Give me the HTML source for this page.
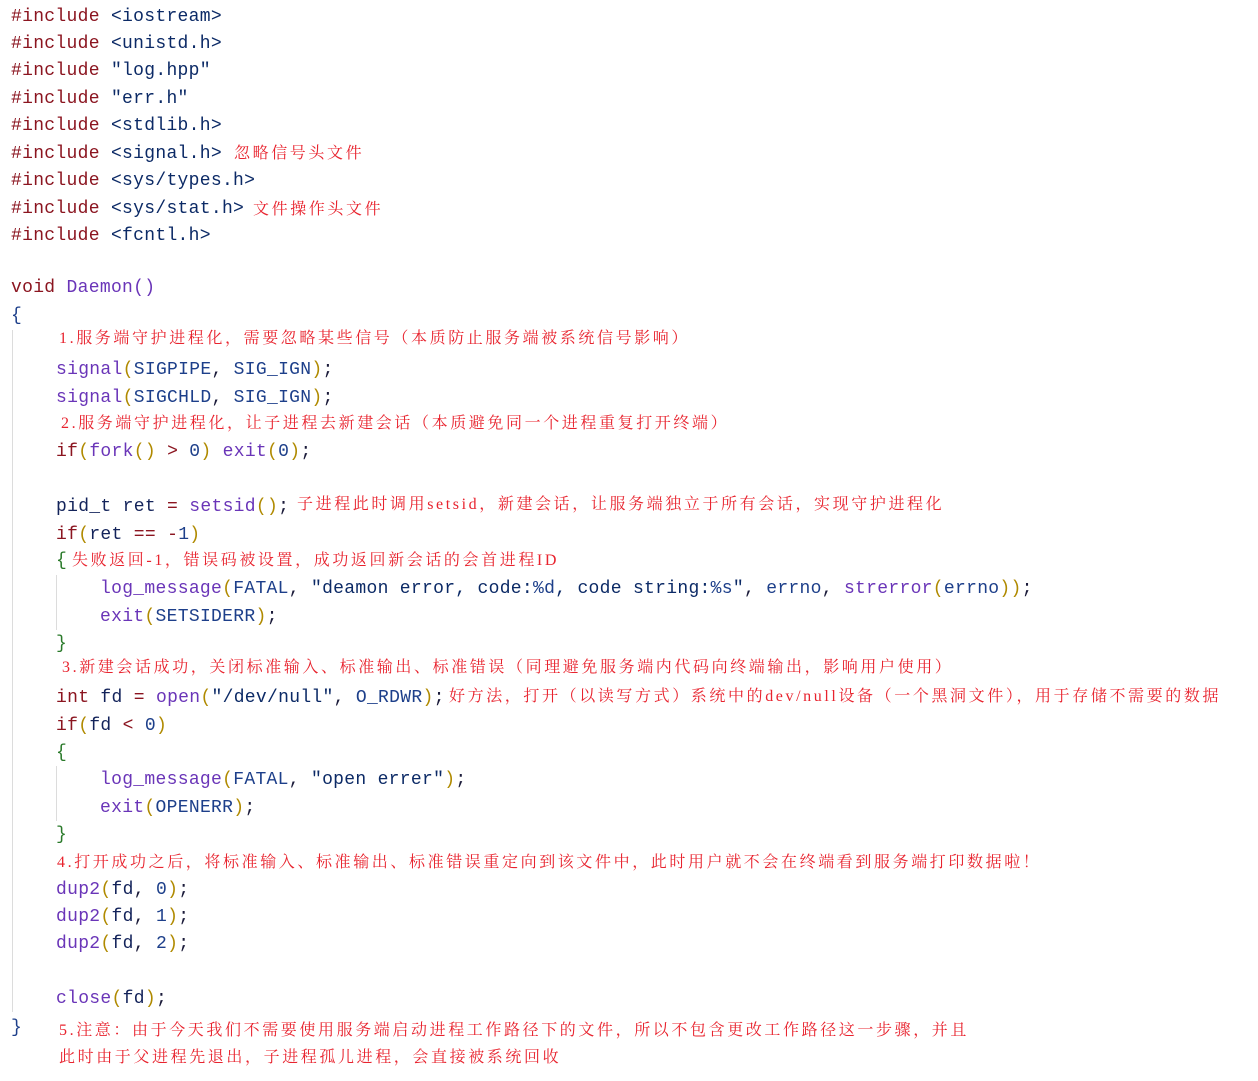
<!DOCTYPE html>
<html><head><meta charset="utf-8"><style>
body{margin:0;background:#fff;width:1258px;height:1081px;position:relative;overflow:hidden}
.l{position:absolute;white-space:pre;font-family:"Liberation Mono","DejaVu Sans Mono",monospace;font-size:18px;line-height:26px;color:#1b1b3a;letter-spacing:0.3px}
.c{position:absolute;white-space:pre;font-family:"Liberation Serif","Noto Serif CJK SC",serif;font-size:16px;line-height:24px;color:#e8232e;letter-spacing:2.6px}
.k{color:#8b1520}.s{color:#0c2a66}.f{color:#6a35b8}.p{color:#b08a00}.n{color:#1d3f8a}.v{color:#13235a}
.g{position:absolute;width:1px;background:#dcdcdc}
</style></head><body>
<div class="g" style="left:12px;top:330px;height:682px"></div>
<div class="g" style="left:56px;top:575px;height:55px"></div>
<div class="g" style="left:56px;top:766px;height:55px"></div>

<div class="l" style="left:11px;top:4px"><span class="k">#include</span> <span class="s">&lt;iostream&gt;</span></div>
<div class="l" style="left:11px;top:31px"><span class="k">#include</span> <span class="s">&lt;unistd.h&gt;</span></div>
<div class="l" style="left:11px;top:58px"><span class="k">#include</span> <span class="s">"log.hpp"</span></div>
<div class="l" style="left:11px;top:86px"><span class="k">#include</span> <span class="s">"err.h"</span></div>
<div class="l" style="left:11px;top:113px"><span class="k">#include</span> <span class="s">&lt;stdlib.h&gt;</span></div>
<div class="l" style="left:11px;top:141px"><span class="k">#include</span> <span class="s">&lt;signal.h&gt;</span></div>
<div class="c" style="left:234px;top:142px">忽略信号头文件</div>
<div class="l" style="left:11px;top:168px"><span class="k">#include</span> <span class="s">&lt;sys/types.h&gt;</span></div>
<div class="l" style="left:11px;top:196px"><span class="k">#include</span> <span class="s">&lt;sys/stat.h&gt;</span></div>
<div class="c" style="left:253px;top:198px">文件操作头文件</div>
<div class="l" style="left:11px;top:223px"><span class="k">#include</span> <span class="s">&lt;fcntl.h&gt;</span></div>

<div class="l" style="left:11px;top:275px"><span class="k">void</span> <span class="f">Daemon</span><span class="f">()</span></div>
<div class="l" style="left:11px;top:303px"><span class="n">{</span></div>
<div class="c" style="left:59px;top:327px">1.服务端守护进程化，需要忽略某些信号（本质防止服务端被系统信号影响）</div>
<div class="l" style="left:56px;top:357px"><span class="f">signal</span><span class="p">(</span><span class="n">SIGPIPE</span>, <span class="n">SIG_IGN</span><span class="p">)</span>;</div>
<div class="l" style="left:56px;top:385px"><span class="f">signal</span><span class="p">(</span><span class="n">SIGCHLD</span>, <span class="n">SIG_IGN</span><span class="p">)</span>;</div>
<div class="c" style="left:61px;top:412px">2.服务端守护进程化，让子进程去新建会话（本质避免同一个进程重复打开终端）</div>
<div class="l" style="left:56px;top:439px"><span class="k">if</span><span class="p">(</span><span class="f">fork</span><span class="p">()</span> <span class="k">&gt;</span> <span class="n">0</span><span class="p">)</span> <span class="f">exit</span><span class="p">(</span><span class="n">0</span><span class="p">)</span>;</div>

<div class="l" style="left:56px;top:494px"><span class="v">pid_t</span> <span class="v">ret</span> <span class="k">=</span> <span class="f">setsid</span><span class="p">()</span>;</div>
<div class="c" style="left:297px;top:493px">子进程此时调用setsid，新建会话，让服务端独立于所有会话，实现守护进程化</div>
<div class="l" style="left:56px;top:522px"><span class="k">if</span><span class="p">(</span><span class="v">ret</span> <span class="k">==</span> <span class="k">-</span><span class="n">1</span><span class="p">)</span></div>
<div class="l" style="left:56px;top:548px"><span class="p" style="color:#2a7a2a">{</span></div>
<div class="c" style="left:72px;top:549px">失败返回-1，错误码被设置，成功返回新会话的会首进程ID</div>
<div class="l" style="left:100px;top:576px"><span class="f">log_message</span><span class="p">(</span><span class="n">FATAL</span>, <span class="s">"deamon error, code:</span><span class="n">%d</span><span class="s">, code string:</span><span class="n">%s</span><span class="s">"</span>, <span class="n">errno</span>, <span class="f">strerror</span><span class="p">(</span><span class="n">errno</span><span class="p">))</span>;</div>
<div class="l" style="left:100px;top:604px"><span class="f">exit</span><span class="p">(</span><span class="n">SETSIDERR</span><span class="p">)</span>;</div>
<div class="l" style="left:56px;top:631px"><span style="color:#2a7a2a">}</span></div>
<div class="c" style="left:62px;top:656px">3.新建会话成功，关闭标准输入、标准输出、标准错误（同理避免服务端内代码向终端输出，影响用户使用）</div>
<div class="l" style="left:56px;top:685px"><span class="k">int</span> <span class="v">fd</span> <span class="k">=</span> <span class="f">open</span><span class="p">(</span><span class="s">"/dev/null"</span>, <span class="n">O_RDWR</span><span class="p">)</span>;</div>
<div class="c" style="left:449px;top:685px">好方法，打开（以读写方式）系统中的dev/null设备（一个黑洞文件），用于存储不需要的数据</div>
<div class="l" style="left:56px;top:713px"><span class="k">if</span><span class="p">(</span><span class="v">fd</span> <span class="k">&lt;</span> <span class="n">0</span><span class="p">)</span></div>
<div class="l" style="left:56px;top:740px"><span style="color:#2a7a2a">{</span></div>
<div class="l" style="left:100px;top:767px"><span class="f">log_message</span><span class="p">(</span><span class="n">FATAL</span>, <span class="s">"open errer"</span><span class="p">)</span>;</div>
<div class="l" style="left:100px;top:795px"><span class="f">exit</span><span class="p">(</span><span class="n">OPENERR</span><span class="p">)</span>;</div>
<div class="l" style="left:56px;top:822px"><span style="color:#2a7a2a">}</span></div>
<div class="c" style="left:57px;top:851px">4.打开成功之后，将标准输入、标准输出、标准错误重定向到该文件中，此时用户就不会在终端看到服务端打印数据啦！</div>
<div class="l" style="left:56px;top:877px"><span class="f">dup2</span><span class="p">(</span><span class="v">fd</span>, <span class="n">0</span><span class="p">)</span>;</div>
<div class="l" style="left:56px;top:904px"><span class="f">dup2</span><span class="p">(</span><span class="v">fd</span>, <span class="n">1</span><span class="p">)</span>;</div>
<div class="l" style="left:56px;top:931px"><span class="f">dup2</span><span class="p">(</span><span class="v">fd</span>, <span class="n">2</span><span class="p">)</span>;</div>

<div class="l" style="left:56px;top:986px"><span class="f">close</span><span class="p">(</span><span class="v">fd</span><span class="p">)</span>;</div>
<div class="l" style="left:11px;top:1015px"><span class="n">}</span></div>
<div class="c" style="left:59px;top:1019px">5.注意：由于今天我们不需要使用服务端启动进程工作路径下的文件，所以不包含更改工作路径这一步骤，并且</div>
<div class="c" style="left:59px;top:1046px">此时由于父进程先退出，子进程孤儿进程，会直接被系统回收</div>
</body></html>
